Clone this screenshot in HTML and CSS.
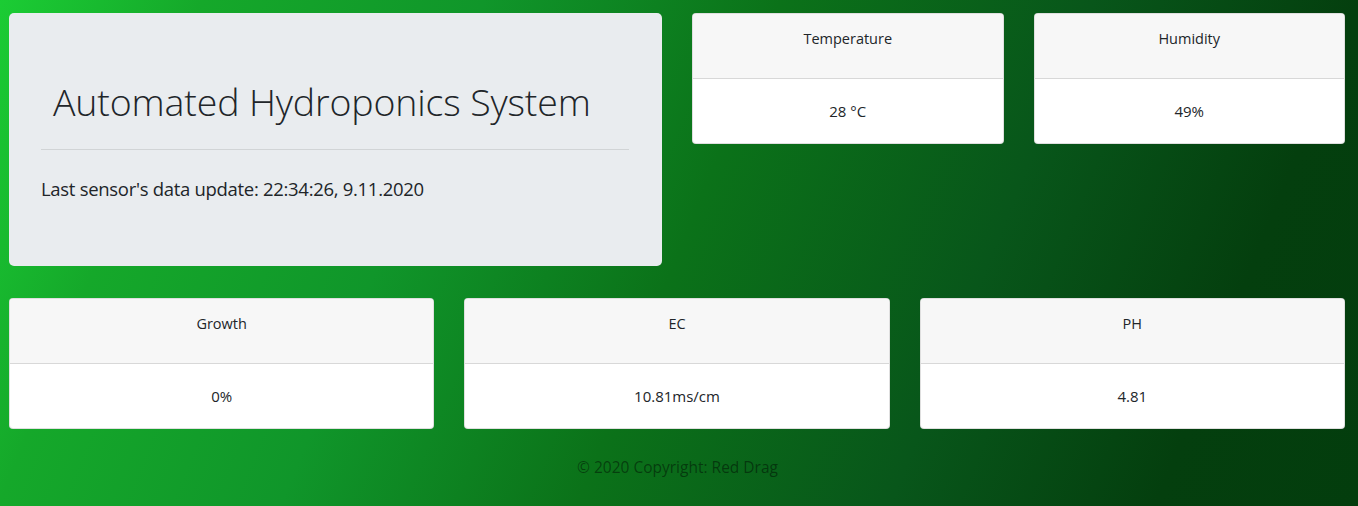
FILE: index.html
```html
<!DOCTYPE html>
<html lang="en">
<head>
<meta charset="utf-8">
<title>Automated Hydroponics System</title>
<link rel="stylesheet" href="styles.css">
</head>
<body>
<div class="page">
  <div class="top-row">
    <div class="jumbotron">
      <h1 class="title">Automated Hydroponics System</h1>
      <hr class="divider">
      <p class="lead">Last sensor's data update: 22:34:26, 9.11.2020</p>
    </div>
    <div class="pair">
      <div class="card">
        <div class="card-header">Temperature</div>
        <div class="card-body">28 °C</div>
      </div>
      <div class="card">
        <div class="card-header">Humidity</div>
        <div class="card-body">49%</div>
      </div>
    </div>
  </div>
  <div class="bottom-row">
    <div class="card">
      <div class="card-header">Growth</div>
      <div class="card-body">0%</div>
    </div>
    <div class="card">
      <div class="card-header">EC</div>
      <div class="card-body">10.81ms/cm</div>
    </div>
    <div class="card">
      <div class="card-header">PH</div>
      <div class="card-body">4.81</div>
    </div>
  </div>
  <footer class="footer">© 2020 Copyright: Red Drag</footer>
</div>
</body>
</html>
```

FILE: styles.css
```css
html, body {
  margin: 0;
  padding: 0;
  height: 100%;
}
body {
  font-family: "Open Sans", "Noto Sans", sans-serif;
  color: #212529;
  background: linear-gradient(112deg, #1bcc34 0%, #15a82a 13%, #10962a 31%, #0b7219 50%, #08561a 70%, #043f0e 87%, #033d0d 100%);
  min-height: 506px;
}
.page {
  padding: 13px 13px 0 9px;
}
.top-row {
  display: grid;
  grid-template-columns: 1fr 1fr;
  column-gap: 30px;
}
.pair {
  display: grid;
  grid-template-columns: 1fr 1fr;
  column-gap: 30px;
  align-items: start;
}
.jumbotron {
  background: #e9ecef;
  border-radius: 5px;
  padding: 64px 33px 60px 32px;
  height: 253px;
  box-sizing: border-box;
}
.title {
  margin: 0 0 8px 0;
  padding-left: 12px;
  font-weight: 300;
  font-size: 37.5px;
  line-height: 50px;
  letter-spacing: -0.15px;
  color: #212529;
}
.divider {
  margin: 22px 0 0 0;
  border: 0;
  border-top: 1px solid rgba(0,0,0,0.1);
}
.lead {
  margin: 24px 0 0 0;
  font-size: 18.5px;
  line-height: 30px;
  font-weight: 400;
  letter-spacing: -0.3px;
}
.card {
  background: #fff;
  border: 1px solid rgba(0,0,0,0.125);
  border-radius: 4px;
  overflow: hidden;
  text-align: center;
  font-size: 14.5px;
  line-height: 24px;
}
.card-header {
  background: #f7f7f7;
  padding: 13px 20px 27px;
  border-bottom: 1px solid rgba(0,0,0,0.125);
}
.card-body {
  padding: 20px 20px 20px;
  font-size: 15px;
}
.bottom-row {
  display: grid;
  grid-template-columns: 1fr 1fr 1fr;
  column-gap: 30px;
  margin-top: 32px;
}
.footer {
  text-align: center;
  margin-top: 26px;
  font-size: 15.5px;
  line-height: 24px;
  color: rgba(0,0,0,0.45);
  padding-left: 1px;
}
```
